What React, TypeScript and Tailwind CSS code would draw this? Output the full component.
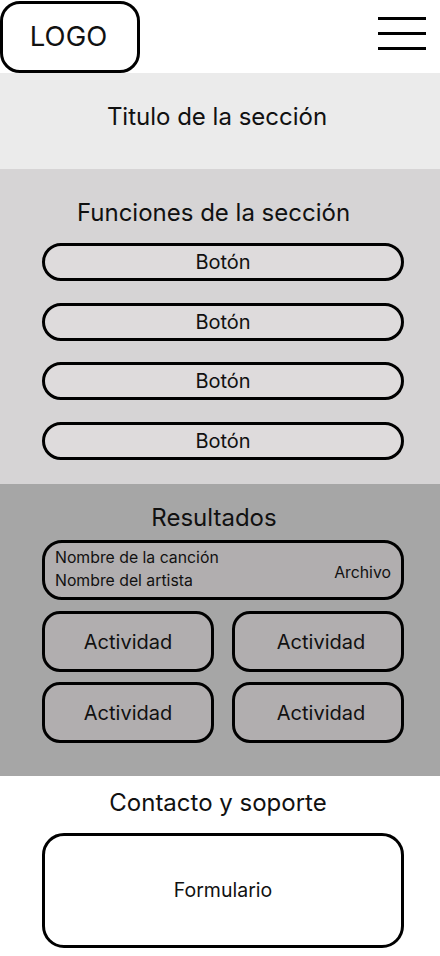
export default function App() {
  const font = { fontFamily: 'Inter, "Noto Sans", sans-serif' };
  return (
    <div className="w-[440px] min-h-[956px] bg-white text-[#111]" style={font}>
      {/* header */}
      <div className="h-[73px] flex items-start justify-between">
        <div className="mt-px w-[140px] h-[72px] border-[3px] border-black rounded-[20px] flex items-center justify-center">
          <span className="text-[27.5px] leading-none -ml-[3px]">LOGO</span>
        </div>
        <div className="mt-[17px] mr-[14px] w-[48px] flex flex-col gap-[12px]">
          <div className="h-[3px] bg-black" />
          <div className="h-[3px] bg-black" />
          <div className="h-[3px] bg-black" />
        </div>
      </div>

      <section className="h-[96px] bg-[#ebebeb] pt-[30px]">
        <h1 className="text-[24px] leading-7 text-center -ml-[6px]">Titulo de la sección</h1>
      </section>

      <section className="h-[315px] bg-[#d6d4d5] pt-[30px]">
        <h2 className="text-[24px] leading-7 text-center -ml-[13px]">Funciones de la sección</h2>
        <div className="mt-[16px] ml-[42px] w-[362px] flex flex-col gap-[21.5px]">
          {[0, 1, 2, 3].map((i) => (
            <button
              key={i}
              className="h-[38px] rounded-full border-[3px] border-black bg-[#dedbdc] text-[20px] leading-none"
            >
              Botón
            </button>
          ))}
        </div>
      </section>

      <section className="h-[292px] bg-[#a6a6a6] pt-[20px]">
        <h2 className="text-[24px] leading-7 text-center -ml-[12px]">Resultados</h2>
        <div className="mt-[8px] ml-[42px] w-[362px]">
          <div className="h-[60px] rounded-[20px] border-[3px] border-black bg-[#b1aeaf] flex items-center justify-between pl-[10px] pr-[10px]">
            <div className="text-[15.8px] leading-[23px] -mt-[2px]">
              <div>Nombre de la canción</div>
              <div>Nombre del artista</div>
            </div>
            <span className="text-[15.8px] mt-[5px]">Archivo</span>
          </div>
          <div className="mt-[11px] grid grid-cols-2 gap-x-[18px] gap-y-[10px]">
            {[0, 1, 2, 3].map((i) => (
              <div
                key={i}
                className={
                  i % 2 === 1
                    ? 'h-[61px] rounded-[18px] border-[3px] border-black bg-[#b1aeaf] flex items-center justify-center text-[20px] pl-[6px]'
                    : 'h-[61px] rounded-[18px] border-[3px] border-black bg-[#b1aeaf] flex items-center justify-center text-[20px]'
                }
              >
                Actividad
              </div>
            ))}
          </div>
        </div>
      </section>

      <section className="pt-[13px]">
        <h2 className="text-[24px] leading-7 text-center -ml-[4px]">Contacto y soporte</h2>
        <div className="mt-[16px] ml-[42px] w-[362px] h-[115px] rounded-[22px] border-[3px] border-black flex items-center justify-center text-[19.5px]">
          Formulario
        </div>
      </section>
    </div>
  );
}
